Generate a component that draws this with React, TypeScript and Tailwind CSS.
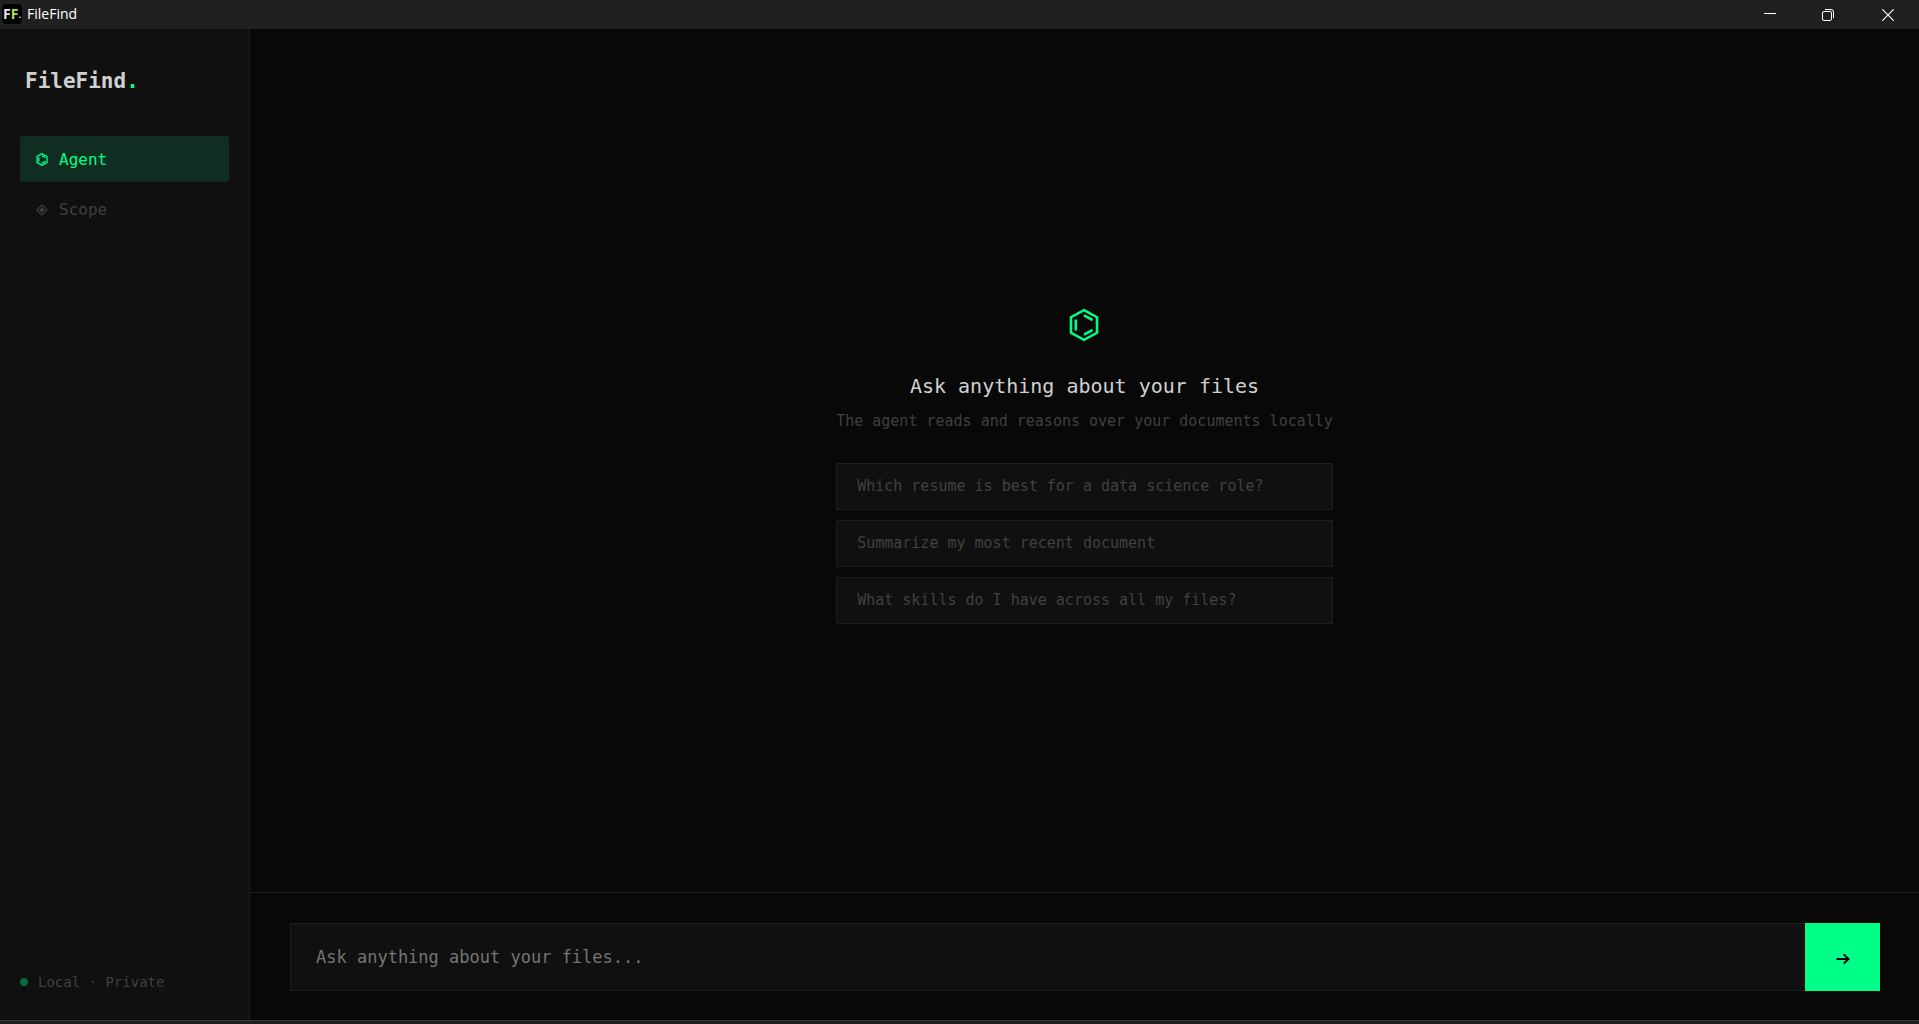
import { useState, type FormEvent } from "react";

const suggestions = [
  "Which resume is best for a data science role?",
  "Summarize my most recent document",
  "What skills do I have across all my files?",
];

function BenzeneIcon({ className, strokeWidth = 2.6 }: { className?: string; strokeWidth?: number }) {
  return (
    <svg viewBox="0 0 30 34" fill="none" stroke="currentColor" strokeWidth={strokeWidth} className={className} aria-hidden="true">
      <path d="M15 2.2 L28 9.2 V24.8 L15 31.8 L2 24.8 V9.2 Z" />
      <path d="M6.8 11.5 V22.5" />
      <path d="M15 7.4 L23.6 12" />
      <path d="M15 26.6 L23.6 22" />
    </svg>
  );
}

function ScopeIcon({ className }: { className?: string }) {
  return (
    <svg viewBox="0 0 12 12" className={className} aria-hidden="true">
      <path d="M6 0.9 L11.1 6 L6 11.1 L0.9 6 Z" fill="none" stroke="currentColor" strokeWidth="1.1" />
      <path d="M6 3.2 L8.8 6 L6 8.8 L3.2 6 Z" fill="currentColor" />
    </svg>
  );
}

function TitleBar() {
  return (
    <header className="flex h-[29px] shrink-0 items-center justify-between bg-[#202020] text-white">
      <div className="flex items-center gap-[5px] pb-px pl-[2px]">
        <span className="flex h-5 w-5 items-center justify-center rounded-[4px] bg-black font-['Open_Sans',sans-serif] text-[14px] font-bold leading-none text-[#e4e4e4]">
          F<span className="text-[#a9dc5c]">F</span>
          <span className="text-[9px]">.</span>
        </span>
        <span className="font-['Open_Sans',sans-serif] text-[14px] leading-5">FileFind</span>
      </div>
      <div className="flex h-full">
        <button type="button" aria-label="Minimize" className="flex w-[58px] items-center justify-center">
          <svg width="12" height="12" viewBox="0 0 12 12" stroke="currentColor" aria-hidden="true">
            <path d="M0 4.5 H12" />
          </svg>
        </button>
        <button type="button" aria-label="Restore" className="flex w-[58px] items-center justify-center">
          <svg width="12" height="12" viewBox="0 0 12 12" fill="none" stroke="currentColor" aria-hidden="true">
            <rect x="0.5" y="2.5" width="9" height="9" rx="1.5" />
            <path d="M3 0.5 H9 Q11.5 0.5 11.5 3 V9" />
          </svg>
        </button>
        <button type="button" aria-label="Close" className="flex w-[62px] items-center justify-center">
          <svg width="12" height="12" viewBox="0 0 12 12" stroke="currentColor" strokeWidth="1.1" aria-hidden="true">
            <path d="M0.3 0.3 L11.7 11.7 M11.7 0.3 L0.3 11.7" />
          </svg>
        </button>
      </div>
    </header>
  );
}

function Sidebar() {
  return (
    <aside className="flex w-[250px] shrink-0 flex-col border-r border-[#1e1e1e] bg-[#101010] px-5 pt-[37px] pb-7">
      <div className="pl-[5px] text-[21px] font-bold leading-[30px] text-[#d0d0d0]">
        FileFind<span className="text-[#00ff88]">.</span>
      </div>
      <nav className="mt-10 flex flex-col gap-1 text-[16px]">
        <button type="button" className="flex h-[46px] items-center gap-[11px] rounded-[3px] bg-[#0f2d20] px-4 pt-px text-[#00ff88]">
          <BenzeneIcon className="h-[13px] w-[12px]" strokeWidth={3.6} />
          Agent
        </button>
        <button type="button" className="flex h-[46px] items-center gap-[11px] rounded-[3px] px-4 pt-px text-[#404040]">
          <ScopeIcon className="h-[12px] w-[12px]" />
          Scope
        </button>
      </nav>
      <div className="mt-auto flex items-center gap-[10px] text-[14px] leading-5 text-[#404040]">
        <span className="h-2 w-2 rounded-full bg-[#0a6b40]" />
        Local · Private
      </div>
    </aside>
  );
}

export default function App() {
  const [query, setQuery] = useState("");

  const handleSubmit = (e: FormEvent) => {
    e.preventDefault();
    setQuery("");
  };

  return (
    <div className="flex h-screen flex-col bg-[#080808] font-['DejaVu_Sans_Mono','Liberation_Mono',monospace]">
      <TitleBar />
      <div className="flex min-h-0 flex-1">
        <Sidebar />
        <main className="flex min-w-0 flex-1 flex-col">
          <section className="flex flex-1 items-center justify-center">
            <div className="flex flex-col items-stretch text-center">
              <div className="flex h-14 items-center justify-center text-[#00ff88]">
                <BenzeneIcon className="h-[34px] w-[30px]" />
              </div>
              <h1 className="mt-5 text-[20px] leading-[26px] text-[#d0d0d0]">Ask anything about your files</h1>
              <p className="mt-3 text-[15px] leading-5 text-[#404040]">
                The agent reads and reasons over your documents locally
              </p>
              <div className="mt-8 flex flex-col gap-[10px]">
                {suggestions.map((text) => (
                  <button
                    key={text}
                    type="button"
                    onClick={() => setQuery(text)}
                    className="h-[47px] border border-[#1e1e1e] bg-[#101010] px-5 text-left text-[15px] text-[#404040]"
                  >
                    {text}
                  </button>
                ))}
              </div>
            </div>
          </section>
          <form onSubmit={handleSubmit} className="flex border-t border-[#1e1e1e] pt-[30px] pr-[39px] pb-[29px] pl-10">
            <input
              type="text"
              aria-label="Ask anything about your files"
              placeholder="Ask anything about your files..."
              value={query}
              onChange={(e) => setQuery(e.target.value)}
              className="h-[68px] min-w-0 flex-1 border border-r-0 border-[#1e1e1e] bg-[#101010] px-[25px] text-[17px] text-[#d0d0d0] outline-none placeholder:text-[#757575]"
            />
            <button type="submit" aria-label="Send" className="flex w-[75px] items-center justify-center bg-[#00ff88] pt-1 text-black">
              <svg width="14" height="12" viewBox="0 0 14 12" fill="none" stroke="currentColor" strokeWidth="2" aria-hidden="true">
                <path d="M0.5 6 H12 M7.8 1.4 L12.4 6 L7.8 10.6" />
              </svg>
            </button>
          </form>
        </main>
      </div>
      <footer className="h-1 shrink-0 border-t border-[#3a3a3a] bg-[#1f1f1f]" />
    </div>
  );
}
